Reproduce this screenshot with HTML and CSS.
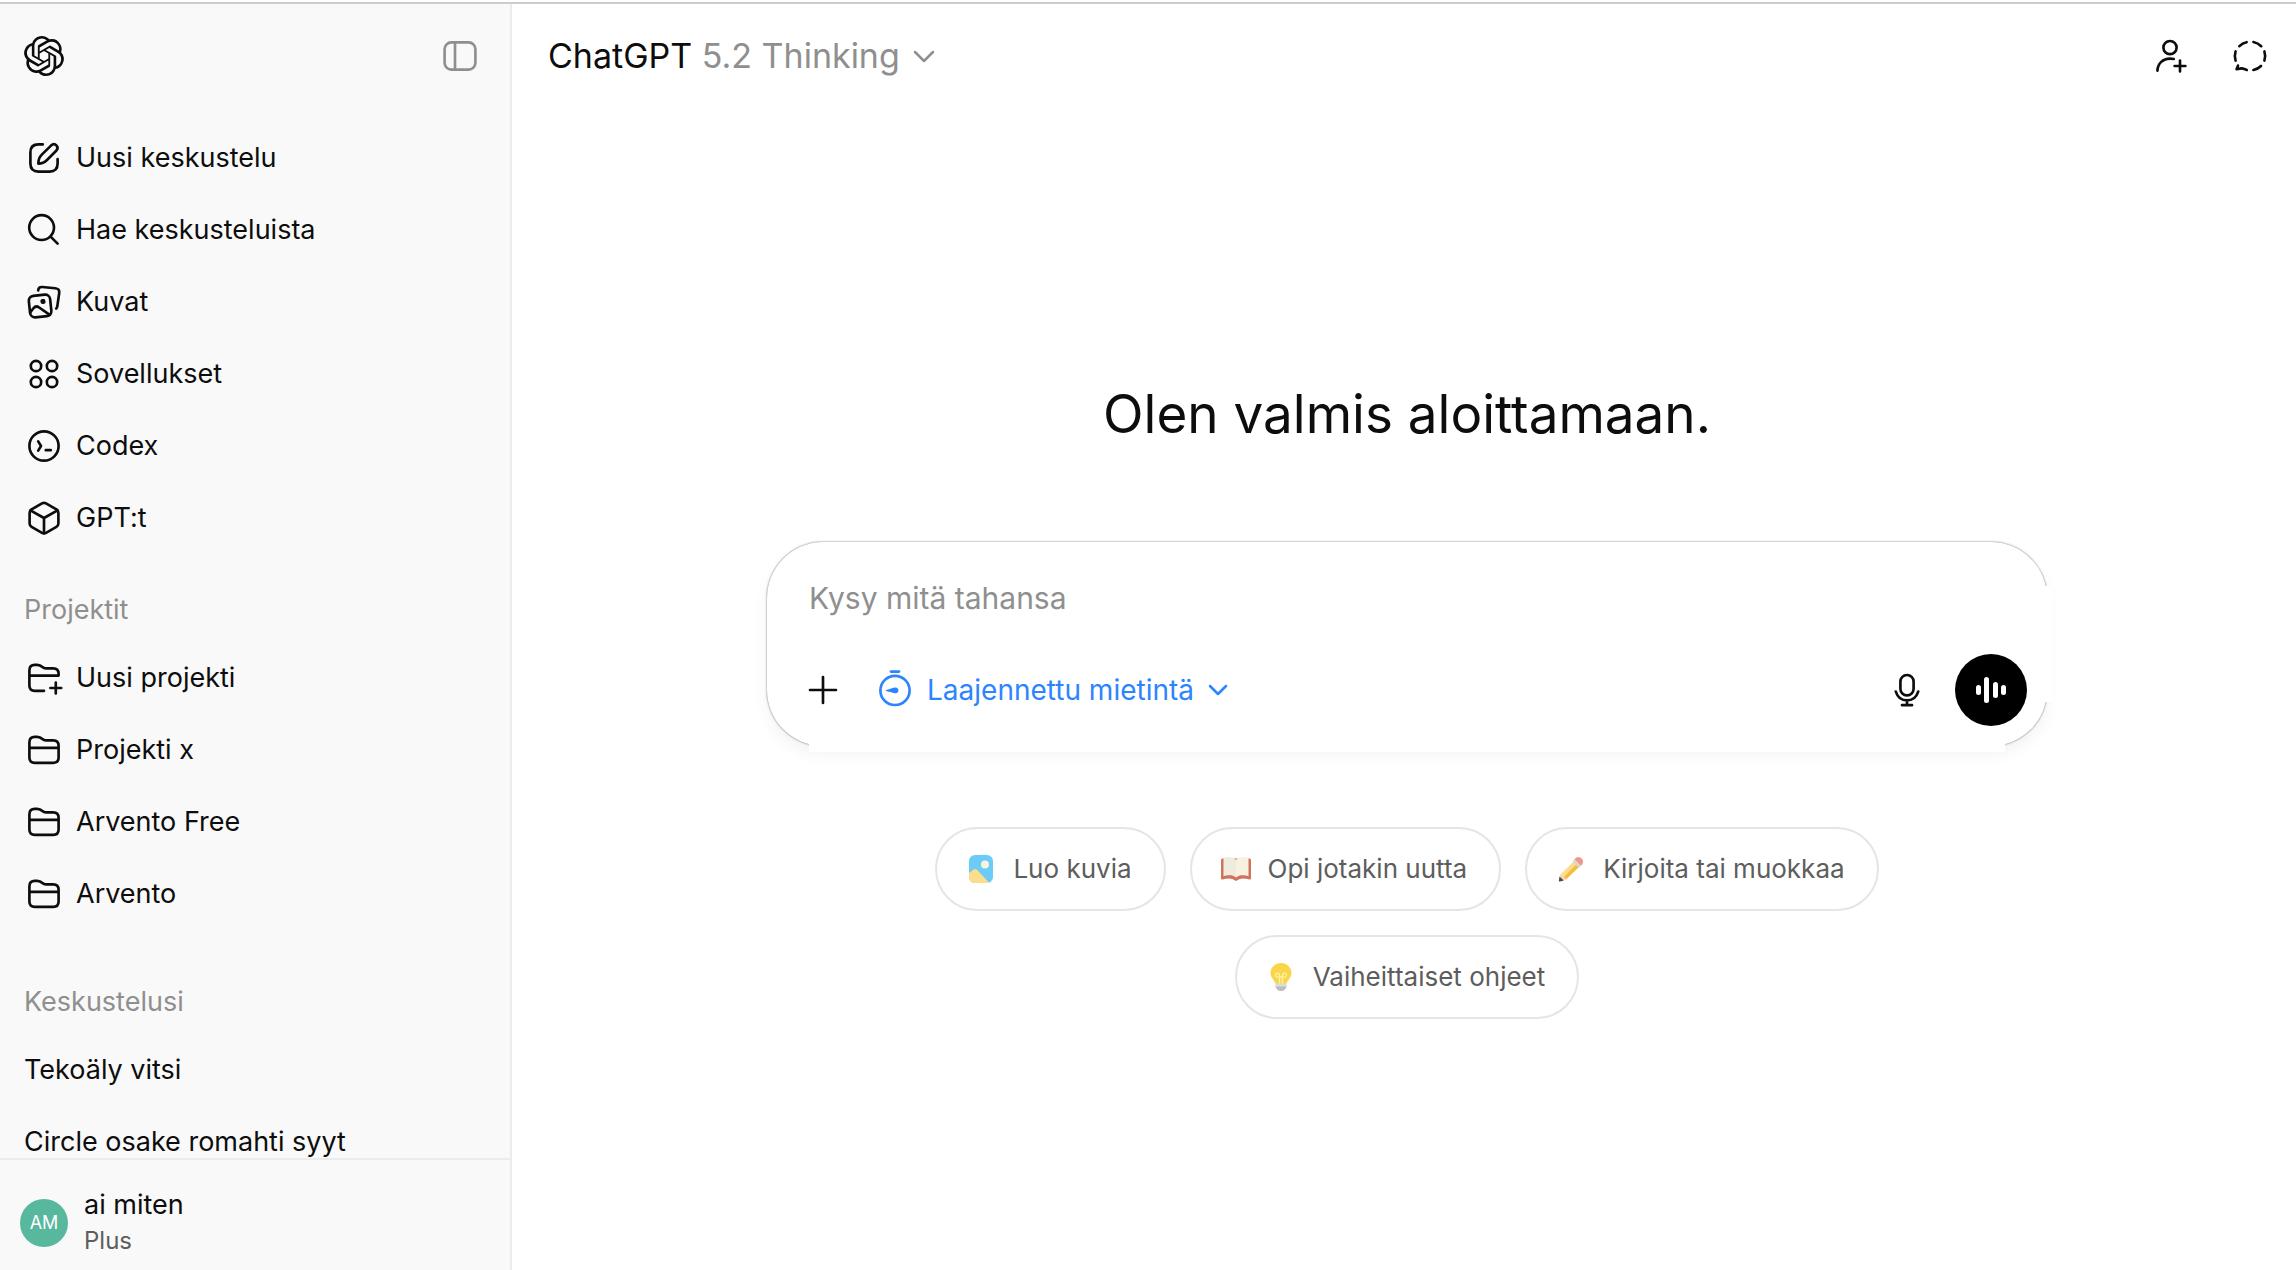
FILE: index.html
```html
<!DOCTYPE html>
<html lang="fi">
<head>
    <meta charset="UTF-8">
    <meta name="viewport" content="width=device-width, initial-scale=1.0">
    <title>ChatGPT</title>
    <link rel="stylesheet" href="styles.css">
</head>
<body>
    <div class="app">
        <aside class="sidebar">
            <div class="sidebar-header">
                <a href="#" class="logo" aria-label="ChatGPT">
                    <svg class="icon" viewBox="0 0 24 24"><path fill="currentColor" stroke="none" d="M22.2819 9.8211a5.9847 5.9847 0 0 0-.5157-4.9108 6.0462 6.0462 0 0 0-6.5098-2.9A6.0651 6.0651 0 0 0 4.9807 4.1818a5.9847 5.9847 0 0 0-3.9977 2.9 6.0462 6.0462 0 0 0 .7427 7.0966 5.98 5.98 0 0 0 .511 4.9107 6.051 6.051 0 0 0 6.5146 2.9001A5.9847 5.9847 0 0 0 13.2599 24a6.0557 6.0557 0 0 0 5.7718-4.2058 5.9894 5.9894 0 0 0 3.9977-2.9001 6.0557 6.0557 0 0 0-.7475-7.0729zm-9.022 12.6081a4.4755 4.4755 0 0 1-2.8764-1.0408l.1419-.0804 4.7783-2.7582a.7948.7948 0 0 0 .3927-.6813v-6.7369l2.02 1.1686a.071.071 0 0 1 .038.052v5.5826a4.504 4.504 0 0 1-4.4945 4.4944zm-9.6607-4.1254a4.4708 4.4708 0 0 1-.5346-3.0137l.142.0852 4.783 2.7582a.7712.7712 0 0 0 .7806 0l5.8428-3.3685v2.3324a.0804.0804 0 0 1-.0332.0615L9.74 19.9502a4.4992 4.4992 0 0 1-6.1408-1.6464zM2.3408 7.8956a4.485 4.485 0 0 1 2.3655-1.9728V11.6a.7664.7664 0 0 0 .3879.6765l5.8144 3.3543-2.0201 1.1685a.0757.0757 0 0 1-.071 0l-4.8303-2.7865A4.504 4.504 0 0 1 2.3408 7.872zm16.5963 3.8558L13.1038 8.364 15.1192 7.2a.0757.0757 0 0 1 .071 0l4.8303 2.7913a4.4944 4.4944 0 0 1-.6765 8.1042v-5.6772a.79.79 0 0 0-.407-.667zm2.0107-3.0231l-.142-.0852-4.7735-2.7818a.7759.7759 0 0 0-.7854 0L9.409 9.2297V6.8974a.0662.0662 0 0 1 .0284-.0615l4.8303-2.7866a4.4992 4.4992 0 0 1 6.6802 4.66zM8.3065 12.863l-2.02-1.1638a.0804.0804 0 0 1-.038-.0567V6.0742a4.4992 4.4992 0 0 1 7.3757-3.4537l-.142.0805L8.704 5.459a.7948.7948 0 0 0-.3927.6813zm1.0976-2.3654l2.602-1.4998 2.6069 1.4998v2.9994l-2.5974 1.4997-2.6067-1.4997Z"/></svg>
                </a>
                <button type="button" class="toggle" aria-label="Sulje sivupalkki">
                    <svg class="icon" viewBox="0 0 20 20"><rect x="2.3" y="3.2" width="15.4" height="13.6" rx="3.4"/><path d="M7.5 3.2v13.6"/></svg>
                </button>
            </div>

            <nav class="sidebar-list">
                <a href="#" class="item">
                    <svg class="icon" viewBox="0 0 20 20"><path d="M9.4 3.2H7.2c-2.8 0-4 1.2-4 4v5.6c0 2.8 1.2 4 4 4h5.6c2.8 0 4-1.2 4-4v-2.3"/><path d="M7.2 12.8c-.1-2 .5-3.3 1.7-4.5l4.6-4.5c.9-.8 2-.8 2.7-.1s.7 1.8-.1 2.7l-4.6 4.6c-1.2 1.2-2.4 1.8-4.3 1.8z"/></svg>
                    <span>Uusi keskustelu</span>
                </a>
                <a href="#" class="item">
                    <svg class="icon" viewBox="0 0 20 20"><circle cx="8.8" cy="8.8" r="6.2"/><path d="M13.3 13.3l3.5 3.5"/></svg>
                    <span>Hae keskusteluista</span>
                </a>
                <a href="#" class="item">
                    <svg class="icon" viewBox="0 0 20 20"><g transform="rotate(-6 8 12)"><rect x="2.7" y="6.6" width="10.7" height="10.8" rx="2.5"/><circle cx="9.7" cy="9.9" r="1.3" fill="currentColor" stroke="none"/><path d="M2.8 14.7l1.8-1.9c.9-.9 2-.9 2.9-.1l4.9 4.2"/></g><path d="M7.1 4.2c.1-1.3.9-1.8 2-1.7l6.5.6c1.6.2 2.2 1 2 2.4l-.9 6.3c-.1 1-.3 1.2-.6 1.5"/></svg>
                    <span>Kuvat</span>
                </a>
                <a href="#" class="item">
                    <svg class="icon" viewBox="0 0 20 20"><circle cx="6" cy="6" r="2.6"/><circle cx="14" cy="6" r="2.6"/><circle cx="6" cy="14" r="2.6"/><circle cx="14" cy="14" r="2.6"/></svg>
                    <span>Sovellukset</span>
                </a>
                <a href="#" class="item">
                    <svg class="icon" viewBox="0 0 20 20"><circle cx="10" cy="10" r="7.3"/><path d="M7.1 7.7l1.4 2.3-1.4 2.3M10.9 12.1h2.5"/></svg>
                    <span>Codex</span>
                </a>
                <a href="#" class="item">
                    <svg class="icon" viewBox="0 0 20 20"><path d="M9 2.7c.7-.4 1.3-.4 2 0l5.2 3c.7.4 1 1 1 1.7v5.3c0 .7-.3 1.3-1 1.7l-5.2 3c-.7.4-1.3.4-2 0l-5.2-3c-.7-.4-1-1-1-1.7V7.4c0-.7.3-1.3 1-1.7z"/><path d="M3.2 6.2L10 10l6.8-3.8M10 10v7.6"/></svg>
                    <span>GPT:t</span>
                </a>

                <h2 class="label">Projektit</h2>
                <a href="#" class="item">
                    <svg class="icon" viewBox="0 0 20 20"><path d="M10 16.4H5.4c-1.8 0-2.7-.9-2.7-2.7V6.1c0-1.8.9-2.7 2.7-2.7h1.2c1.5 0 1.9.4 2.6 1.1.5.5 1 .7 1.8.7h3.6c1.8 0 2.7.9 2.7 2.7v.9H2.7"/><path d="M15.9 12.3v5.4M13.2 15h5.4"/></svg>
                    <span>Uusi projekti</span>
                </a>
                <a href="#" class="item">
                    <svg class="icon" viewBox="0 0 20 20"><path d="M5.4 3.4h1.2c1.5 0 1.9.4 2.6 1.1.5.5 1 .7 1.8.7h3.6c1.8 0 2.7.9 2.7 2.7v5.8c0 1.8-.9 2.7-2.7 2.7H5.4c-1.8 0-2.7-.9-2.7-2.7V6.1c0-1.8.9-2.7 2.7-2.7zM2.7 8.9h14.6"/></svg>
                    <span>Projekti x</span>
                </a>
                <a href="#" class="item">
                    <svg class="icon" viewBox="0 0 20 20"><path d="M5.4 3.4h1.2c1.5 0 1.9.4 2.6 1.1.5.5 1 .7 1.8.7h3.6c1.8 0 2.7.9 2.7 2.7v5.8c0 1.8-.9 2.7-2.7 2.7H5.4c-1.8 0-2.7-.9-2.7-2.7V6.1c0-1.8.9-2.7 2.7-2.7zM2.7 8.9h14.6"/></svg>
                    <span>Arvento Free</span>
                </a>
                <a href="#" class="item">
                    <svg class="icon" viewBox="0 0 20 20"><path d="M5.4 3.4h1.2c1.5 0 1.9.4 2.6 1.1.5.5 1 .7 1.8.7h3.6c1.8 0 2.7.9 2.7 2.7v5.8c0 1.8-.9 2.7-2.7 2.7H5.4c-1.8 0-2.7-.9-2.7-2.7V6.1c0-1.8.9-2.7 2.7-2.7zM2.7 8.9h14.6"/></svg>
                    <span>Arvento</span>
                </a>

                <h2 class="label label-chats">Keskustelusi</h2>
                <a href="#" class="item">Tekoäly vitsi</a>
                <a href="#" class="item">Circle osake romahti syyt</a>
            </nav>

            <button type="button" class="profile">
                <span class="avatar">AM</span>
                <span class="profile-text">
                    <span class="profile-name">ai miten</span>
                    <span class="profile-plan">Plus</span>
                </span>
            </button>
        </aside>

        <main class="main">
            <header class="topbar">
                <button type="button" class="model">
                    <span>ChatGPT <span class="model-version">5.2 Thinking</span></span>
                    <svg class="chevron" viewBox="0 0 24 24"><path d="M3 8l9 9 9-9"/></svg>
                </button>
                <div class="topbar-actions">
                    <button type="button" class="icon-button" aria-label="Aloita ryhmäkeskustelu">
                        <svg class="icon" viewBox="0 0 20 20"><circle cx="10" cy="5.8" r="3.3"/><path d="M3.7 17.3c.2-3.6 2.8-6 6.3-6 .7 0 1.3.1 1.9.2M15 12.3v5.4M12.3 15h5.4"/></svg>
                    </button>
                    <button type="button" class="icon-button" aria-label="Väliaikainen keskustelu">
                        <svg class="icon" viewBox="0 0 20 20"><path d="M4.7 5.1C5.7 4 6.9 3.3 8.3 3.1M11.7 3c1.5.3 2.8 1 3.9 2.1M17.2 7.7c.5 1.5.5 3.1 0 4.6M15.5 15c-1.100 1.100-2.300 1.700-3.800 2M8.400 17c-1.500-.5-2-.9-2.700-.8l-2.400.4c.4-.8.5-1.200.7-1.800M2.800 12.300c-.5-1.500-.5-3.100 0-4.600"/></svg>
                    </button>
                </div>
            </header>

            <section class="start">
                <h1 class="greeting">Olen valmis aloittamaan.</h1>

                <form class="composer">
                    <textarea class="prompt" rows="1" placeholder="Kysy mitä tahansa" aria-label="Kysy mitä tahansa"></textarea>
                    <div class="composer-row">
                        <button type="button" class="icon-button" aria-label="Lisää tiedostoja">
                            <svg class="icon" viewBox="0 0 20 20"><path d="M10 3.5v13M3.5 10h13"/></svg>
                        </button>
                        <button type="button" class="thinking">
                            <svg class="icon" viewBox="0 0 20 20"><circle cx="10" cy="10.2" r="7.3"/><path d="M8 .8h4"/><path fill="currentColor" stroke="none" d="M5.6 10c1.800-.6 3.300-1.200 4.500-1.300 2.200 0 2.200 2.900 0 2.900-1.200-.1-2.700-.7-4.500-1.100-.4-.1-.4-.4 0-.5z"/></svg>
                            <span>Laajennettu mietintä</span>
                            <svg class="chevron" viewBox="0 0 24 24"><path d="M4 8l8 8 8-8"/></svg>
                        </button>
                        <div class="composer-end">
                            <button type="button" class="icon-button" aria-label="Sanele">
                                <svg class="icon" viewBox="0 0 20 20"><rect x="6.7" y="2.5" width="6.6" height="10.2" rx="3.3"/><path d="M4.4 10.8c.9 2.8 3 4.4 5.6 4.400s4.700-1.600 5.600-4.400M10 15.300v2.200M7.500 17.600h5"/></svg>
                            </button>
                            <button type="button" class="icon-button voice" aria-label="Käytä äänitilaa">
                                <svg class="icon" viewBox="0 0 40 40"><g fill="currentColor" stroke="none"><rect x="5" y="15" width="5" height="10" rx="2.5"/><rect x="13" y="7" width="5" height="26" rx="2.5"/><rect x="22" y="12" width="5" height="16" rx="2.5"/><rect x="30" y="15" width="5" height="10" rx="2.5"/></g></svg>
                            </button>
                        </div>
                    </div>
                </form>

                <div class="suggestions">
                    <button type="button" class="chip">
                        <svg class="chip-icon" viewBox="0 0 36 36"><rect x="6" y="4" width="24" height="28" rx="6" fill="#6bccf7"/><circle cx="22" cy="13.500" r="4" fill="#fbf3dc"/><path fill="#fbdd8c" d="M6 22l4-3c1.500-1.200 3-1.200 4.500.2L26.500 32H12c-4 0-6-2-6-6z"/></svg>
                        <span>Luo kuvia</span>
                    </button>
                    <button type="button" class="chip">
                        <svg class="chip-icon" viewBox="0 0 36 36"><path fill="#d0735c" d="M3 9q0-1.500 1.500-1.500h27Q33 7.500 33 9v18q0 2-1.500 1.500-3-1-7-1-3.500 0-6.500 2.500-3-2.500-6.500-2.500-4 0-7 1Q3 29 3 27z"/><path fill="#f0ebdf" d="M5.500 8c0-1.200 2-2 5-2 3.500 0 6 1 7.500 3v17.500c-2-1.800-4-2.300-6.500-2.300-2.300 0-4 .3-6 1z"/><path fill="#f9f1df" d="M30.500 8c0-1.200-2-2-5-2-3.500 0-6 1-7.500 3v17.500c2-1.800 4-2.300 6.500-2.300 2.300 0 4 .3 6 1z"/></svg>
                        <span>Opi jotakin uutta</span>
                    </button>
                    <button type="button" class="chip">
                        <svg class="chip-icon" viewBox="0 0 36 36"><path fill="#fbdd8c" d="M8 23L20.500 10.500l2.800 2.800L10.500 26z"/><path fill="#f5bd3d" d="M10.500 26l12.800-12.700 2.800 2.700L13 28.500z"/><path fill="#f8d5b5" d="M7.500 22.500l6 6L9 29.800 6.500 27z"/><path fill="#4a4a4a" d="M6.500 25.500l4.300 4L7 30.400c-.8.1-1.200-.3-1.100-1z"/><path fill="#d6d6d6" d="M19.500 10.500l2-2 6.500 6.200-2 2z"/><path fill="#f4948c" d="M21.500 8.500c2-2.500 4-3.100 6.500-1.500s3 5 0 7.700z"/></svg>
                        <span>Kirjoita tai muokkaa</span>
                    </button>
                    <button type="button" class="chip">
                        <svg class="chip-icon" viewBox="0 0 36 36"><path fill="#bdbdbd" d="M12.500 26h11c0 3.500-2 6-5.500 6s-5.500-2.500-5.500-6z"/><path fill="#dcdcdc" d="M12.500 24h11v3.500h-11z"/><path fill="#f9d648" d="M18 4c6 0 10.500 4.500 10.500 10 0 4-3 6-5 10.500h-11c-2-4.500-5-6.500-5-10.500C7.500 8.500 12 4 18 4z"/><path fill="none" stroke="#fdf0a8" stroke-width="1.3" d="M16.500 24.500v-8c0-3-4-3-4-.5s2.500 2 5.500 2 5.500.5 5.500-2-4-2.500-4 .5v8"/></svg>
                        <span>Vaiheittaiset ohjeet</span>
                    </button>
                </div>
            </section>
        </main>
    </div>
</body>
</html>
```

FILE: styles.css
```css
* {
    box-sizing: border-box;
}

body {
    margin: 0;
    background-color: #fff;
    color: #0d0d0d;
    font-family: Inter, "Liberation Sans", sans-serif;
    font-size: 27px;
    line-height: 40px;
}

button,
textarea {
    margin: 0;
    padding: 0;
    border: 0;
    background: none;
    color: inherit;
    font: inherit;
}

button {
    cursor: pointer;
}

a {
    color: inherit;
    text-decoration: none;
}

.app {
    display: flex;
    height: 100vh;
    padding-top: 4px;
    background: linear-gradient(#fff 2px, #ccc 2px, #ccc 4px, #fff 4px);
}

/* Ikonit */
.icon {
    display: block;
    flex: none;
    width: 40px;
    height: 40px;
    overflow: visible;
    fill: none;
    stroke: currentColor;
    stroke-width: 1.33;
    stroke-linecap: round;
    stroke-linejoin: round;
}

.chevron {
    display: block;
    flex: none;
    width: 24px;
    height: 24px;
    fill: none;
    stroke: currentColor;
    stroke-width: 2.5;
    stroke-linecap: round;
    stroke-linejoin: round;
}

.icon-button {
    display: flex;
    justify-content: center;
    align-items: center;
    width: 72px;
    height: 72px;
    border-radius: 50%;
}

/* Sivupalkki */
.sidebar {
    display: flex;
    flex-direction: column;
    flex: none;
    width: 512px;
    border-right: 2px solid #ececec;
    background-color: #f9f9f9;
}

.sidebar-header {
    display: flex;
    justify-content: space-between;
    align-items: center;
    flex: none;
    height: 104px;
    padding: 0 30px 0 24px;
}

.toggle {
    color: #8f8f8f;
}

.sidebar-list {
    flex: 1;
    min-height: 0;
    padding-top: 14px;
    overflow: hidden;
}

.item {
    display: flex;
    align-items: center;
    gap: 12px;
    height: 72px;
    padding: 0 24px;
    white-space: nowrap;
}

.label {
    margin: 24px 0 0;
    padding: 12px 24px;
    color: #8f8f8f;
    font-size: 27px;
    font-weight: 400;
}

.label-chats {
    margin-top: 40px;
}

.profile {
    display: flex;
    align-items: center;
    flex: none;
    gap: 16px;
    height: 112px;
    padding: 16px 20px 0;
    border-top: 2px solid #ececec;
    text-align: left;
}

.avatar {
    display: flex;
    justify-content: center;
    align-items: center;
    width: 48px;
    height: 48px;
    border-radius: 50%;
    background-color: #58b89d;
    color: #fff;
    font-size: 18px;
}

.profile-text {
    display: flex;
    flex-direction: column;
    padding-bottom: 4px;
}

.profile-plan {
    color: #5d5d5d;
    font-size: 24px;
    line-height: 32px;
}

/* Pääalue */
.main {
    display: flex;
    flex-direction: column;
    flex: 1;
    min-width: 0;
}

.topbar {
    display: flex;
    justify-content: space-between;
    align-items: center;
    height: 104px;
    padding: 0 10px 0 36px;
}

.model {
    display: flex;
    align-items: center;
    gap: 12px;
    font-size: 34px;
}

.model-version,
.model .chevron {
    color: #8f8f8f;
}

.topbar-actions {
    display: flex;
    gap: 8px;
}

.start {
    display: flex;
    flex-direction: column;
    align-items: center;
    padding: 270px 40px 0 46px;
}

.greeting {
    margin: 0 0 92px;
    font-size: 53px;
    font-weight: 400;
    line-height: 72px;
}

/* Viestikenttä */
.composer {
    position: relative;
    width: 100%;
    max-width: 1280px;
    padding: 20px;
    border-radius: 56px;
    background-color: #fff;
    box-shadow: 0 8px 16px rgba(0, 0, 0, 0.05), 0 0 2px rgba(0, 0, 0, 0.62);
}

/* Valkoiset reunat alhaalla ja oikealla */
.composer::before,
.composer::after {
    content: "";
    position: absolute;
    background-color: #fff;
}

.composer::before {
    left: 42px;
    right: 42px;
    bottom: -6px;
    height: 16px;
}

.composer::after {
    top: 44px;
    bottom: 44px;
    right: -6px;
    width: 8px;
}

.prompt {
    display: block;
    width: 100%;
    height: 92px;
    padding: 14px 22px 34px;
    outline: none;
    overflow: hidden;
    resize: none;
    font-size: 30px;
    line-height: 44px;
}

.prompt::placeholder {
    color: #8f8f8f;
    opacity: 1;
}

.composer-row {
    display: flex;
    align-items: center;
}

.thinking {
    display: flex;
    align-items: center;
    gap: 12px;
    height: 72px;
    padding: 0 16px;
    color: #2c84ff;
    font-size: 28px;
}

.composer-end {
    display: flex;
    gap: 12px;
    margin-left: auto;
}

.voice {
    background-color: #000;
    color: #fff;
}

/* Ehdotukset */
.suggestions {
    display: flex;
    flex-wrap: wrap;
    justify-content: center;
    gap: 24px;
    max-width: 1280px;
    padding-top: 81px;
}

.chip {
    display: flex;
    align-items: center;
    gap: 14px;
    height: 84px;
    padding: 0 32px 0 26px;
    border: 2px solid #e5e5e5;
    border-radius: 42px;
    color: #5d5d5d;
    font-size: 26px;
    white-space: nowrap;
}

.chip-icon {
    flex: none;
    width: 36px;
    height: 36px;
}
```
